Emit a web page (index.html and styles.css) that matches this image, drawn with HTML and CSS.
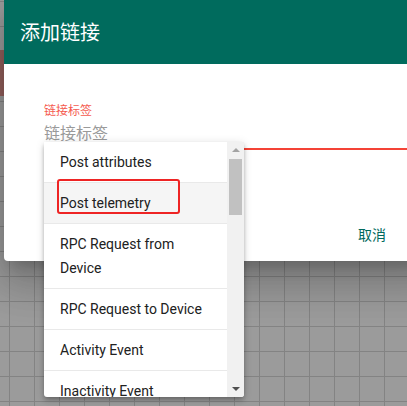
FILE: index.html
```html
<!DOCTYPE html>
<html lang="zh">
<head>
<meta charset="utf-8">
<title>添加链接</title>
<link rel="stylesheet" href="styles.css">
</head>
<body>
<div class="canvas">
  <div class="node"></div>
  <div class="dialog">
    <div class="dialog-header">添加链接</div>
    <div class="dialog-body">
      <div class="field">
        <div class="field-label">链接标签</div>
        <div class="field-input">链接标签</div>
      </div>
    </div>
    <div class="dialog-actions">
      <span class="btn">取消</span>
    </div>
  </div>
  <div class="dropdown">
    <ul class="options">
      <li class="option">Post attributes</li>
      <li class="option active">Post telemetry</li>
      <li class="option">RPC Request from Device</li>
      <li class="option">RPC Request to Device</li>
      <li class="option">Activity Event</li>
      <li class="option">Inactivity Event</li>
    </ul>
    <div class="scrollbar">
      <div class="sb-btn"><span class="arrow-up"></span></div>
      <div class="sb-track"><div class="sb-thumb"></div></div>
      <div class="sb-btn"><span class="arrow-down"></span></div>
    </div>
    <div class="highlight"></div>
  </div>
</div>
</body>
</html>
```
FILE: styles.css
```css
html, body {
  margin: 0;
  height: 100%;
  overflow: hidden;
}
body {
  font-family: Roboto, "Noto Sans CJK SC", sans-serif;
  background-color: #9b9b9b;
  background-image:
    linear-gradient(to right, #838383 1px, transparent 1px),
    linear-gradient(to bottom, #838383 1px, transparent 1px);
  background-size: 25px 25px;
  background-position: 9px 1px;
}
.canvas {
  position: relative;
  height: 100%;
  padding-left: 4px;
}
.node {
  position: absolute;
  left: 0;
  top: 50px;
  width: 10px;
  height: 46px;
  background: #93605c;
}
.dialog {
  position: relative;
  width: 440px;
  height: 261px;
  background: #fff;
  border-radius: 0 0 4px 4px;
  box-shadow: 0 11px 15px -7px rgba(0,0,0,.2), 0 24px 38px 3px rgba(0,0,0,.14), 0 9px 46px 8px rgba(0,0,0,.12);
  display: flex;
  flex-direction: column;
}
.dialog-header {
  height: 64px;
  line-height: 64px;
  background: #006b5d;
  color: #fff;
  font-family: "Noto Sans CJK SC", sans-serif;
  font-size: 20px;
  padding-left: 16px;
}
.dialog-body {
  padding: 38px 0 0 40px;
}
.field {
  border-bottom: 2px solid #f44336;
  padding-bottom: 6px;
}
.field-label {
  font-family: "Noto Sans CJK SC", sans-serif;
  font-size: 12px;
  line-height: 16px;
  color: #f55a4e;
  margin-bottom: 4px;
}
.field-input {
  font-family: "Noto Sans CJK SC", sans-serif;
  font-size: 16px;
  line-height: 20px;
  color: #9a9a9a;
}
.dialog-actions {
  display: flex;
  padding: 66px 0 0 354px;
}
.btn {
  font-family: "Noto Sans CJK SC", sans-serif;
  font-size: 14px;
  line-height: 36px;
  color: #00695c;
}
.dropdown {
  position: absolute;
  left: 44px;
  top: 142px;
  width: 200px;
  height: 255px;
  background: #fff;
  border-radius: 0 0 3px 3px;
  overflow: hidden;
  display: flex;
  box-shadow: 0 2px 4px -1px rgba(0,0,0,.2), 0 4px 5px 0 rgba(0,0,0,.14), 0 1px 10px 0 rgba(0,0,0,.12);
}
.options {
  list-style: none;
  margin: 0;
  padding: 0;
  flex: 1;
  overflow: hidden;
}
.option {
  padding: 8px 16px;
  font-size: 14px;
  line-height: 24px;
  color: #212121;
  border-bottom: 1px solid #e9e9e9;
}
.option.active {
  background: #f5f5f5;
}
.scrollbar {
  width: 17px;
  background: #f1f1f1;
  display: flex;
  flex-direction: column;
}
.sb-btn {
  height: 17px;
  display: flex;
  align-items: center;
  justify-content: center;
}
.sb-track {
  flex: 1;
  padding: 0 2px;
}
.sb-thumb {
  height: 56px;
  background: #c1c1c1;
}
.arrow-up {
  width: 0;
  height: 0;
  border-left: 4px solid transparent;
  border-right: 4px solid transparent;
  border-bottom: 4px solid #a3a3a3;
  margin-top: -1px;
}
.arrow-down {
  width: 0;
  height: 0;
  border-left: 4px solid transparent;
  border-right: 4px solid transparent;
  border-top: 4px solid #505050;
  margin-top: 1px;
}
.highlight {
  position: absolute;
  left: 13px;
  top: 37px;
  width: 119px;
  height: 31px;
  border: 2px solid #ee2424;
  border-radius: 3px;
}
```
